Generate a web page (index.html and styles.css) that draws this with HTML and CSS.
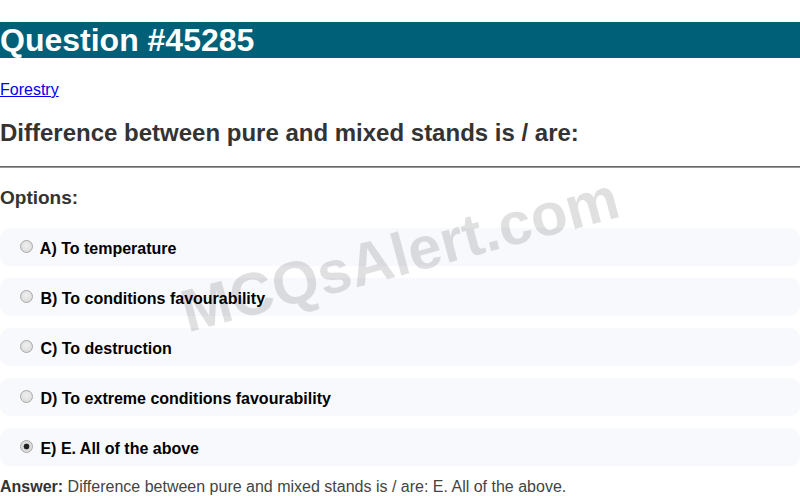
FILE: index.html
```html
<!DOCTYPE html>
<html>
<head>
<meta charset="utf-8">
<link rel="stylesheet" href="styles.css">
</head>
<body>
<h1 class="title">Question #45285</h1>
<p class="cat"><a href="#">Forestry</a></p>
<h2 class="question">Difference between pure and mixed stands is / are:</h2>
<hr class="sep">
<h3 class="opts-title">Options:</h3>
<div class="options">
  <label class="option"><input type="radio" name="o" disabled> A) To temperature</label>
  <label class="option"><input type="radio" name="o" disabled> B) To conditions favourability</label>
  <label class="option"><input type="radio" name="o" disabled> C) To destruction</label>
  <label class="option"><input type="radio" name="o" disabled> D) To extreme conditions favourability</label>
  <label class="option"><input type="radio" name="o" disabled checked> E) E. All of the above</label>
</div>
<p class="answer"><strong>Answer:</strong> Difference between pure and mixed stands is / are: E. All of the above.</p>
<div class="watermark">MCQsAlert.com</div>
</body>
</html>
```
FILE: styles.css
```css
html, body {
  margin: 0;
  padding: 0;
}
body {
  font-family: "Liberation Sans", Arial, sans-serif;
  font-size: 16px;
  color: #333;
  background: #fff;
  position: relative;
  overflow: hidden;
  height: 496px;
}
.title {
  font-size: 32px;
  font-weight: bold;
  color: #fff;
  background: #006078;
  margin: 22px 0 0 0;
  line-height: 36px;
  padding: 0;
}
.cat {
  margin: 23px 0 0 0;
  line-height: 18px;
}
.cat a {
  color: #0000ee;
}
.question {
  font-size: 24px;
  font-weight: bold;
  color: #333;
  margin: 20px 0 0 0;
  line-height: 28px;
}
.sep {
  margin: 19px 0 0 0;
  border: 0;
  border-top: 1px solid #666;
  border-bottom: 1px solid #999;
  height: 0;
}
.opts-title {
  font-size: 19px;
  font-weight: bold;
  color: #333;
  margin: 19px 0 0 0;
  line-height: 22px;
}
.options {
  display: flex;
  flex-direction: column;
  gap: 12px;
  margin-top: 19px;
}
.option {
  display: block;
  background: #f8f9fc;
  border-radius: 10px;
  padding: 12px 15px 8px 15px;
  line-height: 18px;
  font-weight: bold;
  color: #000;
}
.option input {
  -webkit-appearance: none;
  appearance: none;
  box-sizing: border-box;
  margin: 0 3px 0 5px;
  vertical-align: top;
  width: 13px;
  height: 13px;
  border-radius: 50%;
  border: 1px solid #a8a8a8;
  background: radial-gradient(circle at 50% 40%, #f0f0f0 0%, #dedede 70%, #d0d0d0 100%);
}
.option input:checked {
  background: radial-gradient(circle, #222 0, #222 2.6px, #d8d8d8 3.2px, #e4e4e4 100%);
}
.answer {
  margin: 12px 0 0 0;
  line-height: 18px;
  color: #444;
}
.answer strong {
  color: #333;
}
.watermark {
  position: absolute;
  left: 175px;
  top: 220px;
  font-size: 60px;
  font-weight: bold;
  color: rgba(0, 0, 0, 0.12);
  transform: rotate(-15deg);
  transform-origin: center;
  white-space: nowrap;
  pointer-events: none;
  line-height: 70px;
}
```
